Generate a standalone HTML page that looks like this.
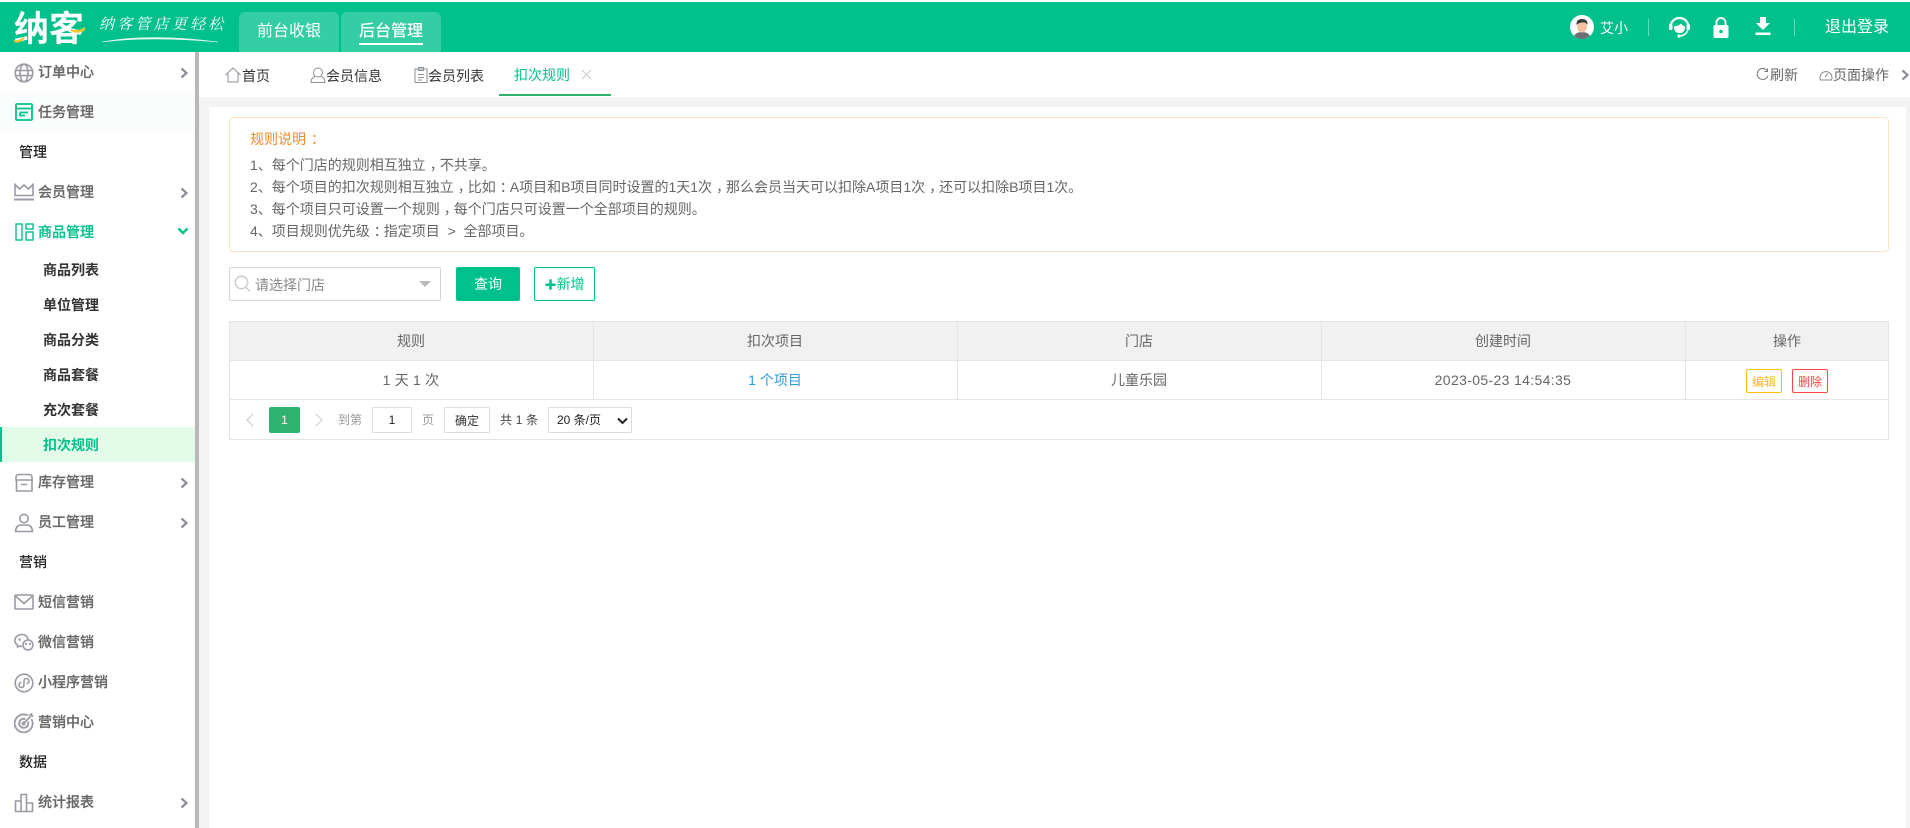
<!DOCTYPE html>
<html lang="zh"><head><meta charset="utf-8"><title>扣次规则</title>
<style>
*{box-sizing:border-box}
html,body{margin:0;padding:0;width:1910px;height:828px;overflow:hidden;background:#fff;font-family:"Liberation Sans","Noto Sans CJK SC",sans-serif;color:#333}
.a{position:absolute;white-space:nowrap}
#top{left:0;top:2px;width:1910px;height:50px;background:#00c18c}
.nav{top:12px;width:100px;height:40px;background:#33cea3;border-radius:6px 6px 0 0;color:#fff;font-size:16px;line-height:40px;text-align:center}
.w{color:#fff}
.m{left:38px;font-size:14px;line-height:20px;color:#666;font-weight:500;-webkit-text-stroke:.2px #666}
.h{left:19px;font-size:14px;line-height:20px;color:#222;font-weight:500}
.s{left:43px;font-size:14px;line-height:20px;color:#333;font-weight:700}
.ic{position:absolute;left:14px;width:20px;height:20px;fill:none;stroke:#9a9aa5;stroke-width:1.6}
.ar{position:absolute;left:180px;width:9px;height:12px;fill:none;stroke:#8d8d99;stroke-width:2.2}
.t{font-size:14px;line-height:20px;top:66px;color:#333}
.ti{position:absolute;top:67px;width:16px;height:16px;fill:none;stroke:#8a8f99;stroke-width:1}
.n{left:250px;font-size:14px;line-height:22px;color:#666}
.n i{font-style:normal;position:relative;left:4px}
.b{position:absolute;border:1px solid #e4e4e4}
.c{position:absolute;text-align:center;font-size:14px;color:#666}
.p{font-size:12px;line-height:26px;top:407px;color:#999}
</style></head><body>
<div class="a" id="top"></div>

<!-- logo -->
<div class="a" style="left:14px;top:11px;font-size:35px;line-height:38px;font-weight:700;color:#fff">纳客</div>
<svg class="a" style="left:13px;top:25px" width="75" height="20" viewBox="0 0 75 20"><path d="M1 15Q6 16 10 12L12 13Q7 19 1 17Z" fill="#f2c62e"/><path d="M58 4Q65 7 72 2V5Q65 10 58 6Z" fill="#f2c62e"/></svg>
<div class="a" style="left:99px;top:12px;font-size:15px;line-height:24px;letter-spacing:3.2px;color:#fff;font-style:italic;font-weight:400;font-family:'Noto Serif CJK SC',serif">纳客管店更轻松</div>
<svg class="a" style="left:100px;top:34px" width="122" height="12" viewBox="0 0 122 12"><path d="M2 8Q50 -1 118 8Q50 2 2 8Z" fill="#e6f8f2" stroke="#e6f8f2" stroke-width=".5"/></svg>
<div class="a nav" style="left:239px">前台收银</div>
<div class="a nav" style="left:341px;font-weight:500">后台管理</div>
<div class="a" style="left:359px;top:43px;width:64px;height:2px;background:#fff"></div>

<!-- top right -->
<svg class="a" style="left:1570px;top:15px" width="24" height="24" viewBox="0 0 24 24"><circle cx="12" cy="12" r="12" fill="#fff"/><path d="M4 21Q6 17 12 17T20 21Q16 24 12 24T4 21Z" fill="#6d7078"/><ellipse cx="12" cy="11.500" rx="5" ry="6" fill="#f3c19d"/><path d="M6.500 10Q6 4 12 4T17.500 10Q16 7 12 7.500T6.500 10Z" fill="#3b3b3b"/></svg>
<div class="a w" style="left:1600px;top:18px;font-size:14px;line-height:20px">艾小</div>
<div class="a" style="left:1648px;top:19px;width:1px;height:17px;background:#66daba"></div>
<svg class="a" style="left:1669px;top:16px" width="21" height="22" viewBox="0 0 21 22"><path d="M1.500 14A9 9 0 1 1 19.500 14" fill="none" stroke="#fff" stroke-width="2.200" transform="translate(0 -3)"/><path d="M5 10Q9 10.500 12 7.500Q14 10 16 10.500V12Q15.500 17 10.500 17T5 12Z" fill="#fff"/><rect x="0" y="8" width="3.500" height="6" rx="1.500" fill="#fff"/><rect x="17.500" y="8" width="3.500" height="6" rx="1.500" fill="#fff"/><path d="M19 13Q18 19 11 20" fill="none" stroke="#fff" stroke-width="1.400"/><circle cx="10" cy="20" r="1.600" fill="#fff"/></svg>
<svg class="a" style="left:1713px;top:17px" width="16" height="21" viewBox="0 0 16 21"><path d="M3.500 9V5.500A4.500 4.500 0 0 1 12.500 5.500V9" fill="none" stroke="#fff" stroke-width="1.800"/><rect x="0.500" y="8" width="15" height="13" rx="1.500" fill="#fff"/><circle cx="8" cy="14.500" r="1.800" fill="#00c18c"/></svg>
<svg class="a" style="left:1755px;top:17px" width="16" height="19" viewBox="0 0 16 19"><path d="M5 0H11V6H15L8 13L1 6H5Z" fill="#fff"/><rect x="0.500" y="15.500" width="15" height="2.500" fill="#fff"/></svg>
<div class="a" style="left:1794px;top:19px;width:1px;height:17px;background:#66daba"></div>
<div class="a w" style="left:1825px;top:17px;font-size:16px;line-height:22px">退出登录</div>

<!-- sidebar -->
<div class="a" style="left:0;top:52px;width:195px;height:776px;background:#fff"></div>
<div class="a" style="left:0;top:92px;width:195px;height:40px;background:#fafdfb"></div>
<div class="a" style="left:195px;top:52px;width:4px;height:776px;background:#b8b8b8"></div>

<div class="a m" style="top:62px">订单中心</div>
<svg class="ic" style="top:63px" viewBox="0 0 20 20"><circle cx="10" cy="10" r="8.800"/><ellipse cx="10" cy="10" rx="4" ry="8.800"/><path d="M1 7.500H19M1 12.500H19"/></svg>
<svg class="ar" style="top:67px" viewBox="0 0 9 12"><path d="M1.500 1.500L6.500 6L1.500 10.500"/></svg>

<div class="a m" style="top:102px">任务管理</div>
<svg class="ic" style="top:103px;left:15px;width:18px;height:18px;stroke:#00c28c;stroke-width:1.800" viewBox="0 0 18 18"><rect x="1" y="1" width="16" height="16" rx="1"/><path d="M1 5.500H17M5 9.500H13M5 9.500V12.500H10"/></svg>

<div class="a h" style="top:142px">管理</div>

<div class="a m" style="top:182px">会员管理</div>
<svg class="ic" style="top:183px" viewBox="0 0 20 20"><path d="M1 1.500L5.500 6L10 2L14.500 6L19 1.500V12.500H1Z"/><path d="M0 16.500H20" stroke-width="2"/></svg>
<svg class="ar" style="top:187px" viewBox="0 0 9 12"><path d="M1.500 1.500L6.500 6L1.500 10.500"/></svg>

<div class="a m" style="top:222px;color:#00c28c;-webkit-text-stroke:.2px #00c28c">商品管理</div>
<svg class="ic" style="top:223px;left:15px;width:19px;height:18px;stroke:#00c28c;stroke-width:1.400" viewBox="0 0 19 18"><rect x="1" y="1" width="6" height="16"/><rect x="11" y="1" width="7" height="5"/><rect x="11" y="9" width="7" height="8"/></svg>
<svg class="a" style="left:177px;top:227px;fill:none;stroke:#00c28c;stroke-width:2.400" width="12" height="9" viewBox="0 0 12 9"><path d="M1.500 1.500L6 6L10.500 1.500"/></svg>

<div class="a s" style="top:260px">商品列表</div>
<div class="a s" style="top:295px">单位管理</div>
<div class="a s" style="top:330px">商品分类</div>
<div class="a s" style="top:365px">商品套餐</div>
<div class="a s" style="top:400px">充次套餐</div>
<div class="a" style="left:0;top:427px;width:195px;height:35px;background:#e3fcea"></div>
<div class="a" style="left:0;top:427px;width:2px;height:35px;background:#00c28c"></div>
<div class="a s" style="top:435px;color:#00c28c">扣次规则</div>

<div class="a m" style="top:472px">库存管理</div>
<svg class="ic" style="top:473px" viewBox="0 0 20 20"><path d="M2.500 7V18H18V7"/><path d="M2 7V4Q2 1.500 5 1.500H15Q18 1.500 18 4V7ZM7 11.500H13"/></svg>
<svg class="ar" style="top:477px" viewBox="0 0 9 12"><path d="M1.500 1.500L6.500 6L1.500 10.500"/></svg>

<div class="a m" style="top:512px">员工管理</div>
<svg class="ic" style="top:513px" viewBox="0 0 20 20"><circle cx="10" cy="5.500" r="4.200"/><path d="M1.500 18.500Q2 12 7 12H13Q18 12 18.500 18.500Z"/></svg>
<svg class="ar" style="top:517px" viewBox="0 0 9 12"><path d="M1.500 1.500L6.500 6L1.500 10.500"/></svg>

<div class="a h" style="top:552px">营销</div>

<div class="a m" style="top:592px">短信营销</div>
<svg class="ic" style="top:592px" viewBox="0 0 20 20"><rect x="1" y="3" width="18" height="14" rx="1"/><path d="M1.500 4L10 11.500L18.500 4"/></svg>

<div class="a m" style="top:632px">微信营销</div>
<svg class="ic" style="top:632px" viewBox="0 0 20 20"><path d="M8 2.500C3 2.500 .8 6 .8 8.500C.8 10.500 2 12 3.500 13V15L5.500 14Q7 14.500 8 14.500"/><path d="M8 2.500C11 2.500 13.500 4.500 14 7.500"/><circle cx="14" cy="13" r="5"/><circle cx="5.500" cy="7.500" r=".5"/><circle cx="12" cy="12" r=".4"/><circle cx="16" cy="12" r=".4"/></svg>

<div class="a m" style="top:672px">小程序营销</div>
<svg class="ic" style="top:673px" viewBox="0 0 20 20"><circle cx="10" cy="10" r="8.800"/><path d="M10 8V12A2.500 2.500 0 1 1 7.500 9.500M10 12V8A2.500 2.500 0 1 1 12.500 10.500"/></svg>

<div class="a m" style="top:712px">营销中心</div>
<svg class="ic" style="top:713px" viewBox="0 0 20 20"><path d="M14 2.500A9 9 0 1 0 17.500 6" stroke-width="1.800"/><path d="M11.500 6.200A4.500 4.500 0 1 0 13.800 8.500" stroke-width="1.800"/><circle cx="9.500" cy="10.500" r="1.200"/><path d="M9.500 10.500L16.500 3.500M15 2.500L17.500 1V3H19.500"/></svg>

<div class="a h" style="top:752px">数据</div>

<div class="a m" style="top:792px">统计报表</div>
<svg class="ic" style="top:793px" viewBox="0 0 20 20"><path d="M1.500 8H7V18.500H1.500ZM7 1.500H12.500V18.500H7ZM12.500 10H18.500V18.500H12.500Z"/></svg>
<svg class="ar" style="top:797px" viewBox="0 0 9 12"><path d="M1.500 1.500L6.500 6L1.500 10.500"/></svg>

<!-- tab bar -->
<div class="a" style="left:199px;top:97px;width:1711px;height:731px;background:#f3f3f3"></div>
<div class="a" style="left:209px;top:107px;width:1697px;height:721px;background:#fff"></div>

<svg class="ti" style="left:225px" viewBox="0 0 16 16"><path d="M.5 8L8 1L15.500 8M3 6.500V15H13V6.500"/></svg>
<div class="a t" style="left:242px">首页</div>
<svg class="ti" style="left:310px" viewBox="0 0 16 16"><circle cx="8" cy="5.500" r="4.500"/><path d="M1 15.500Q1 11 5 9.500M11 9.500Q15 11 15 15.500H1"/></svg>
<div class="a t" style="left:326px">会员信息</div>
<svg class="ti" style="left:413px" viewBox="0 0 16 16"><rect x="2" y="2" width="12" height="13.500"/><rect x="5.500" y=".5" width="5" height="3"/><path d="M5 7.500H11M5 10.500H11M5 13H9"/></svg>
<div class="a t" style="left:428px">会员列表</div>
<div class="a" style="left:514px;top:65px;font-size:14px;line-height:20px;color:#00c28c">扣次规则</div>
<svg class="a" style="left:581px;top:69px;fill:none;stroke:#ccc;stroke-width:1.100" width="11" height="11" viewBox="0 0 11 11"><path d="M1 1L10 10M10 1L1 10"/></svg>
<div class="a" style="left:499px;top:94px;width:112px;height:2px;background:#2fb26e"></div>

<svg class="a" style="left:1756px;top:68px;fill:none;stroke:#777;stroke-width:1" width="13" height="14" viewBox="0 0 13 14"><path d="M11 2.500A5.500 5.500 0 1 0 12 7.500M11.500 .5V3.500H8.500"/></svg>
<div class="a" style="left:1770px;top:65px;font-size:14px;line-height:20px;color:#666">刷新</div>
<svg class="a" style="left:1819px;top:69px;fill:none;stroke:#888;stroke-width:1" width="14" height="12" viewBox="0 0 14 12"><path d="M1.500 11A6 6 0 1 1 12.500 11ZM6 8L9 4.500"/></svg>
<div class="a" style="left:1833px;top:65px;font-size:14px;line-height:20px;color:#666">页面操作</div>
<svg class="a" style="left:1901px;top:69px;fill:none;stroke:#8d8d99;stroke-width:2.200" width="8" height="12" viewBox="0 0 8 12"><path d="M1.500 1.500L6.500 6L1.500 10.500"/></svg>

<!-- notice -->
<div class="a" style="left:229px;top:117px;width:1660px;height:135px;border:1px solid #fbe3c3;border-radius:4px"></div>
<div class="a" style="left:250px;top:128px;font-size:14px;line-height:22px;color:#f58a2b">规则说明<span style="position:relative;left:5px">：</span></div>
<div class="a n" style="top:154px">1、每个门店的规则相互独立<i>，</i>不共享。</div>
<div class="a n" style="top:176px">2、每个项目的扣次规则相互独立<i>，</i>比如<i>：</i>A项目和B项目同时设置的1天1次<i>，</i>那么会员当天可以扣除A项目1次<i>，</i>还可以扣除B项目1次。</div>
<div class="a n" style="top:198px">3、每个项目只可设置一个规则<i>，</i>每个门店只可设置一个全部项目的规则。</div>
<div class="a n" style="top:220px">4、项目规则优先级<i>：</i>指定项目 &nbsp;&gt;&nbsp; 全部项目。</div>

<!-- filter -->
<div class="a" style="left:229px;top:267px;width:212px;height:34px;border:1px solid #d5d5d5;border-radius:2px"></div>
<svg class="a" style="left:234px;top:275px;fill:none;stroke:#ccc;stroke-width:1.500" width="17" height="18" viewBox="0 0 17 18"><circle cx="7.500" cy="7.500" r="6.200"/><path d="M12 12.500L16 16.500"/></svg>
<div class="a" style="left:255px;top:274px;font-size:14px;line-height:22px;color:#888">请选择门店</div>
<div class="a" style="left:419px;top:281px;width:0;height:0;border-left:6px solid transparent;border-right:6px solid transparent;border-top:6px solid #bbb"></div>
<div class="a" style="left:456px;top:267px;width:64px;height:34px;background:#00c18c;border-radius:2px;color:#fff;font-size:14px;line-height:34px;text-align:center">查询</div>
<div class="a" style="left:534px;top:267px;width:61px;height:34px;border:1px solid #00c28c;border-radius:2px;color:#00c28c;font-size:14px;line-height:32px;text-align:center"><b style="font-size:12px">✚</b>新增</div>

<!-- table -->
<div class="b" style="left:229px;top:321px;width:1660px;height:119px;background:#fff"></div>
<div class="a" style="left:230px;top:322px;width:1658px;height:39px;background:#f1f1f1"></div>
<div class="a" style="left:229px;top:360px;width:1660px;height:1px;background:#e4e4e4"></div>
<div class="a" style="left:229px;top:399px;width:1660px;height:1px;background:#e4e4e4"></div>
<div class="a" style="left:593px;top:321px;width:1px;height:78px;background:#e4e4e4"></div>
<div class="a" style="left:957px;top:321px;width:1px;height:78px;background:#e4e4e4"></div>
<div class="a" style="left:1321px;top:321px;width:1px;height:78px;background:#e4e4e4"></div>
<div class="a" style="left:1685px;top:321px;width:1px;height:78px;background:#e4e4e4"></div>

<div class="c" style="left:229px;width:364px;top:331px;line-height:20px">规则</div>
<div class="c" style="left:593px;width:364px;top:331px;line-height:20px">扣次项目</div>
<div class="c" style="left:957px;width:364px;top:331px;line-height:20px">门店</div>
<div class="c" style="left:1321px;width:364px;top:331px;line-height:20px">创建时间</div>
<div class="c" style="left:1685px;width:204px;top:331px;line-height:20px">操作</div>

<div class="c" style="left:229px;width:364px;top:370px;line-height:20px;letter-spacing:.2px">1 天 1 次</div>
<div class="c" style="left:593px;width:364px;top:370px;line-height:20px;color:#2d9cdb">1 个项目</div>
<div class="c" style="left:957px;width:364px;top:370px;line-height:20px">儿童乐园</div>
<div class="c" style="left:1321px;width:364px;top:370px;line-height:20px;letter-spacing:.35px">2023-05-23 14:54:35</div>
<div class="a" style="left:1746px;top:369px;width:36px;height:24px;border:1px solid #ffc107;border-radius:2px;color:#fbb81c;font-size:12px;line-height:24px;text-align:center">编辑</div>
<div class="a" style="left:1792px;top:369px;width:36px;height:24px;border:1px solid #f44;border-radius:2px;color:#f44;font-size:12px;line-height:24px;text-align:center">删除</div>

<!-- pagination -->
<svg class="a" style="left:245px;top:413px;fill:none;stroke:#d5d5d5;stroke-width:1.400" width="10" height="14" viewBox="0 0 10 14"><path d="M8 1L2 7L8 13"/></svg>
<div class="a" style="left:269px;top:407px;width:31px;height:26px;background:#2fb26e;border-radius:2px;color:#fff;font-size:12px;line-height:26px;text-align:center">1</div>
<svg class="a" style="left:314px;top:413px;fill:none;stroke:#d5d5d5;stroke-width:1.400" width="10" height="14" viewBox="0 0 10 14"><path d="M2 1L8 7L2 13"/></svg>
<div class="a p" style="left:338px;top:407px">到第</div>
<div class="a" style="left:372px;top:407px;width:40px;height:26px;border:1px solid #ddd;border-radius:2px;font-size:12px;line-height:24px;text-align:center;color:#222">1</div>
<div class="a p" style="left:422px;top:407px">页</div>
<div class="a" style="left:444px;top:407px;width:46px;height:26px;border:1px solid #ddd;border-radius:2px;font-size:12px;line-height:26px;text-align:center;color:#333">确定</div>
<div class="a p" style="left:500px;top:407px;color:#444;letter-spacing:.2px">共 1 条</div>
<div class="a" style="left:548px;top:407px;width:84px;height:26px;border:1px solid #ddd;border-radius:2px;font-size:12px;line-height:24px;padding-left:8px;color:#222">20 条/页</div>
<svg class="a" style="left:617px;top:417px;fill:none;stroke:#222;stroke-width:2" width="11" height="8" viewBox="0 0 11 8"><path d="M1 1.500L5.500 6L10 1.500"/></svg>
</body></html>
